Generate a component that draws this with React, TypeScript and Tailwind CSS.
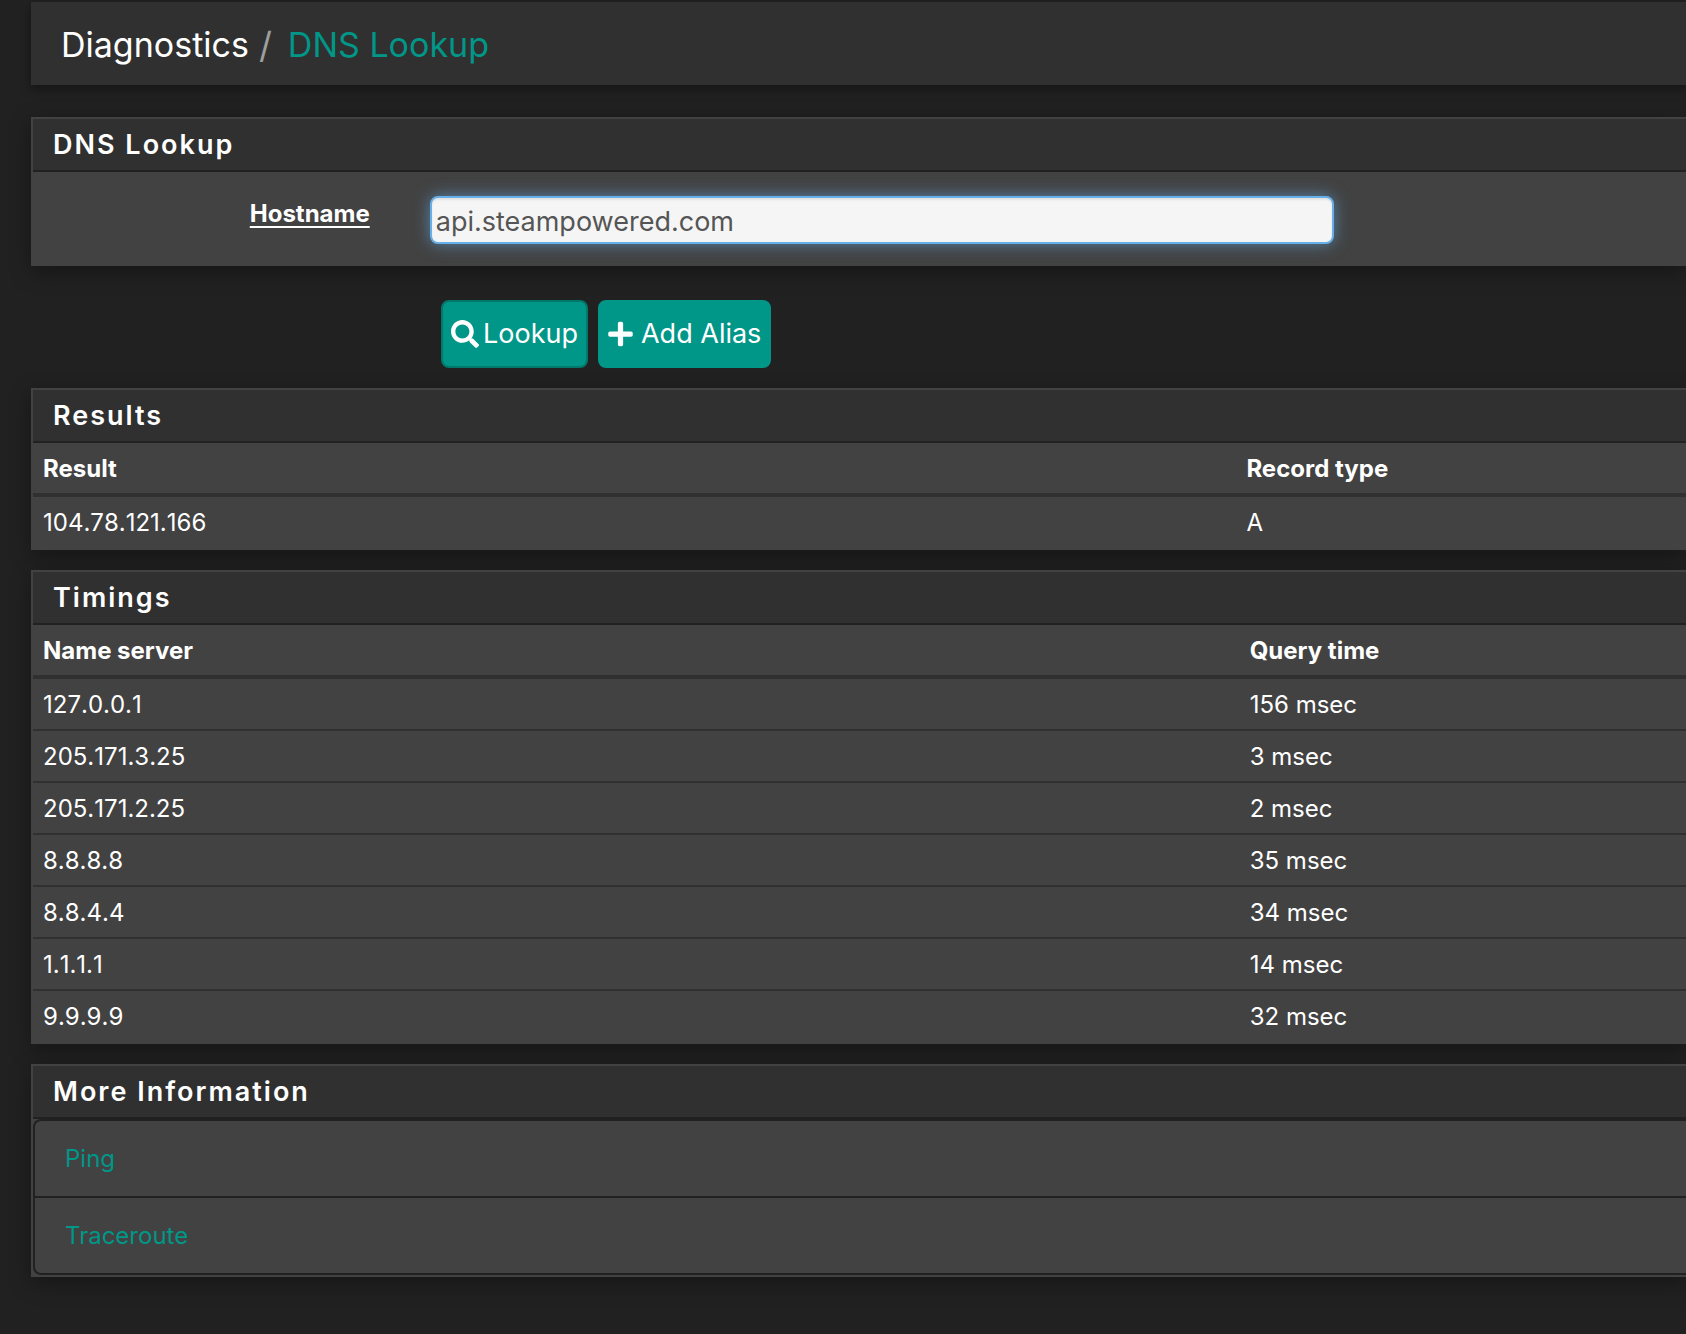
import React from 'react';
import { FaPlus, FaSearch } from 'react-icons/fa';

const results = [['104.78.121.166', 'A']];

const timings = [
  ['127.0.0.1', '156 msec'],
  ['205.171.3.25', '3 msec'],
  ['205.171.2.25', '2 msec'],
  ['8.8.8.8', '35 msec'],
  ['8.8.4.4', '34 msec'],
  ['1.1.1.1', '14 msec'],
  ['9.9.9.9', '32 msec'],
];

function Panel({ title, children }: { title: string; children: React.ReactNode }) {
  return (
    <section className="border-2 border-r-0 border-[#424242] bg-[#424242] shadow-[0_6px_20px_rgba(0,0,0,0.35)]">
      <h2 className="border-b-2 border-[#212121] bg-[#303030] px-5 pt-2 pb-[7px] text-[27px] leading-9 font-semibold tracking-[2px]">
        {title}
      </h2>
      {children}
    </section>
  );
}

function DataTable({ head, rows, firstCol }: { head: string[]; rows: string[][]; firstCol: string }) {
  return (
    <table className="w-full table-fixed border-collapse text-left text-2xl leading-8">
      <thead>
        <tr className="border-b-4 border-[#303030]">
          <th className={`${firstCol} px-2.5 pt-2.5 pb-2 font-bold`}>{head[0]}</th>
          <th className="px-2.5 pt-2.5 pb-2 font-bold">{head[1]}</th>
        </tr>
      </thead>
      <tbody>
        {rows.map((row) => (
          <tr key={row[0]} className="border-b-2 border-[#303030] last:border-b-0 [&:last-child>td]:pb-[9px]">
            <td className="px-2.5 pt-2.5 pb-2 [font-kerning:none]">{row[0]}</td>
            <td className="px-2.5 pt-2.5 pb-2">{row[1]}</td>
          </tr>
        ))}
      </tbody>
    </table>
  );
}

export default function App() {
  return (
    <div className="min-h-screen overflow-hidden bg-[#212121] pt-0.5 pb-14 pl-[31px] font-['Inter',sans-serif] text-white">
      {/* Breadcrumb */}
      <header className="bg-[#303030] px-[30px] pt-[21px] pb-[18px] shadow-[0_4px_10px_rgba(0,0,0,0.4)]">
        <nav aria-label="Breadcrumb">
          <ol className="flex text-[34px] leading-11">
            <li>Diagnostics</li>
            <li aria-hidden="true" className="pr-4 pl-2.5 text-4xl leading-11 text-[#9e9e9e]">/</li>
            <li>
              <a href="#" className="text-[#009688]">DNS Lookup</a>
            </li>
          </ol>
        </nav>
      </header>

      <form className="mt-8" onSubmit={(e) => e.preventDefault()}>
        <Panel title="DNS Lookup">
          <div className="flex items-start pt-6 pb-5">
            <label
              htmlFor="host"
              className="w-[24%] pr-15 text-right text-2xl leading-9 font-bold underline decoration-2 underline-offset-4"
            >
              Hostname
            </label>
            <input
              id="host"
              type="text"
              defaultValue="api.steampowered.com"
              className="h-12 w-[54.7%] rounded-lg border-2 border-[#66afe9] bg-[#f5f5f5] px-1 pt-0.5 text-[27px] text-[#555] shadow-[inset_0_2px_2px_rgba(0,0,0,0.075),0_0_16px_rgba(102,175,233,0.6)] outline-none"
            />
          </div>
        </Panel>

        {/* Actions */}
        <div className="flex gap-2.5 pt-[34px] pb-5 pl-[410px]">
          <button
            type="submit"
            className="flex h-17 items-center gap-1 rounded-lg border-2 border-[#00796b] bg-[#009688] px-2 text-[27px] leading-10"
          >
            <FaSearch className="size-7" />
            Lookup
          </button>
          <button
            type="button"
            className="flex h-17 items-center gap-2 rounded-lg border-2 border-[#009688] bg-[#009688] px-2 text-[27px] leading-10"
          >
            <FaPlus className="h-7 w-[25px]" />
            Add Alias
          </button>
        </div>
      </form>

      <div className="space-y-5">
        <Panel title="Results">
          <DataTable head={['Result', 'Record type']} rows={results} firstCol="w-[72.8%]" />
        </Panel>

        <Panel title="Timings">
          <DataTable head={['Name server', 'Query time']} rows={timings} firstCol="w-[73%]" />
        </Panel>

        <Panel title="More Information">
          <ul className="divide-y-2 divide-[#212121] rounded-l-lg border-2 border-r-0 border-[#212121] text-2xl leading-8">
            <li className="px-[30px] pt-[22px] pb-[21px]">
              <a href="#" className="text-[#009688]">Ping</a>
            </li>
            <li className="px-[30px] pt-[22px] pb-[21px]">
              <a href="#" className="text-[#009688]">Traceroute</a>
            </li>
          </ul>
        </Panel>
      </div>
    </div>
  );
}
